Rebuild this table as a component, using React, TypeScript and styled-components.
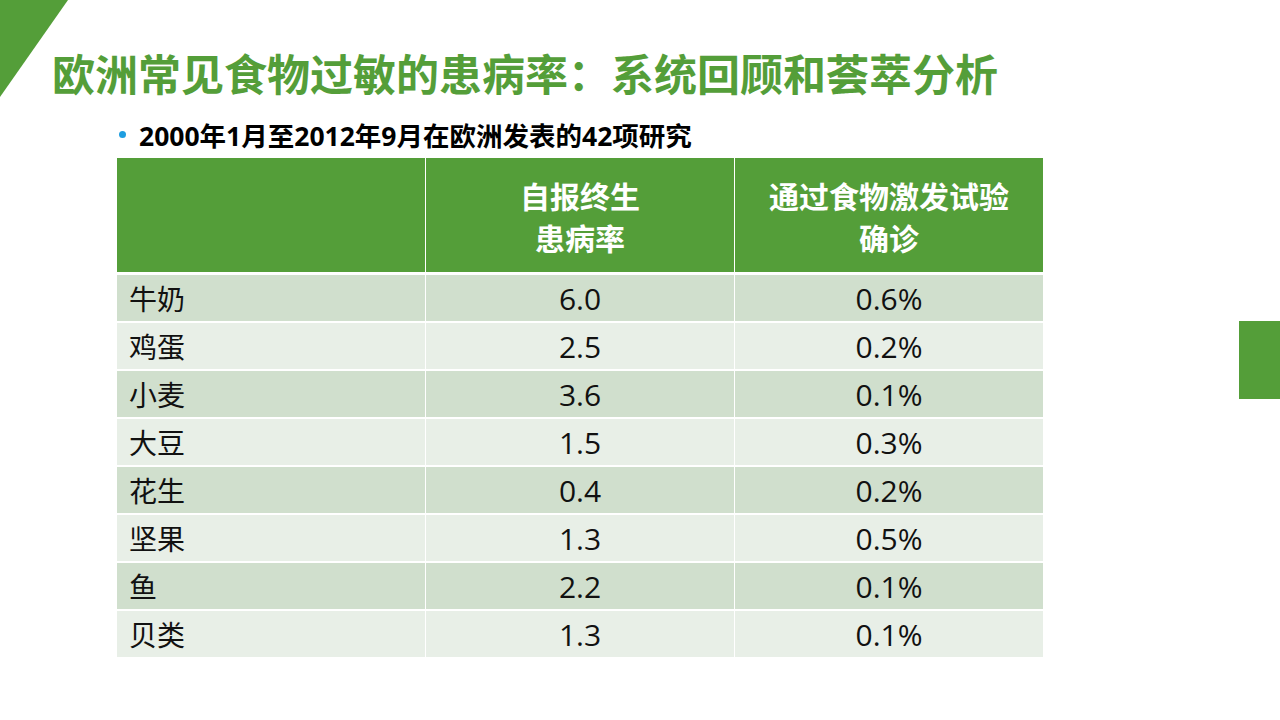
import React from "react";
import styled, { createGlobalStyle } from "styled-components";

interface FoodRow {
  name: string;
  selfReported: string;
  challenge: string;
}

const rows: FoodRow[] = [
  { name: "牛奶", selfReported: "6.0", challenge: "0.6%" },
  { name: "鸡蛋", selfReported: "2.5", challenge: "0.2%" },
  { name: "小麦", selfReported: "3.6", challenge: "0.1%" },
  { name: "大豆", selfReported: "1.5", challenge: "0.3%" },
  { name: "花生", selfReported: "0.4", challenge: "0.2%" },
  { name: "坚果", selfReported: "1.3", challenge: "0.5%" },
  { name: "鱼", selfReported: "2.2", challenge: "0.1%" },
  { name: "贝类", selfReported: "1.3", challenge: "0.1%" },
];

const GREEN = "#549e39";

const App: React.FC = () => {
  return (
    <>
      <GlobalStyle />
      <Slide>
        <Corner viewBox="0 0 68 97" width="68" height="97">
          <polygon points="0,0 68,0 0,97" fill={GREEN} />
        </Corner>
        <SideTab />
        <Title>欧洲常见食物过敏的患病率：系统回顾和荟萃分析</Title>
        <Bullet>
          <Dot />
          <span>2000年1月至2012年9月在欧洲发表的42项研究</span>
        </Bullet>
        <Table>
          <HeadRow>
            <HeadCell />
            <HeadCell>
              <HeadLine>自报终生</HeadLine>
              <HeadLine>患病率</HeadLine>
            </HeadCell>
            <HeadCell>
              <HeadLine>通过食物激发试验</HeadLine>
              <HeadLine>确诊</HeadLine>
            </HeadCell>
          </HeadRow>
          {rows.map((row, i) => (
            <BodyRow key={row.name} $shade={i % 2 === 0} $first={i === 0}>
              <NameCell>{row.name}</NameCell>
              <NumCell>{row.selfReported}</NumCell>
              <NumCell>{row.challenge}</NumCell>
            </BodyRow>
          ))}
        </Table>
      </Slide>
    </>
  );
};

export default App;

const GlobalStyle = createGlobalStyle`
  html, body {
    margin: 0;
    padding: 0;
    background: #ffffff;
  }
`;

const Slide = styled.div`
  position: relative;
  width: 1280px;
  height: 720px;
  overflow: hidden;
  background: #ffffff;
  font-family: "Noto Sans CJK SC", "Noto Sans", sans-serif;
`;

const Corner = styled.svg`
  position: absolute;
  left: 0;
  top: 0;
  display: block;
`;

const SideTab = styled.div`
  position: absolute;
  right: 0;
  top: 321px;
  width: 41px;
  height: 78px;
  background: ${GREEN};
`;

const Title = styled.h1`
  margin: 0;
  padding: 47px 0 0 52px;
  font-size: 43px;
  line-height: 50px;
  font-weight: 700;
  color: ${GREEN};
  white-space: nowrap;
`;

const Bullet = styled.div`
  display: flex;
  align-items: center;
  gap: 13px;
  margin-top: 20px;
  padding-left: 119px;
  height: 34px;
  font-family: "Open Sans", "Noto Sans CJK SC", sans-serif;
  font-size: 26.5px;
  font-weight: 700;
  color: #000000;
  white-space: nowrap;
`;

const Dot = styled.span`
  width: 7px;
  height: 7px;
  border-radius: 50%;
  background: #1f9ee0;
  flex-shrink: 0;
`;

const Table = styled.div`
  margin: 7px 0 0 117px;
  width: 926px;
`;

const HeadRow = styled.div`
  display: grid;
  grid-template-columns: 308px 309px 309px;
  height: 114px;
  background: ${GREEN};
`;

const HeadCell = styled.div`
  display: flex;
  flex-direction: column;
  align-items: center;
  justify-content: center;
  gap: 0;
  padding-top: 2px;
  color: #ffffff;
  font-weight: 700;
  & + & {
    border-left: 1px solid #ffffff;
  }
`;

const HeadLine = styled.span`
  display: block;
  font-size: 30px;
  line-height: 42px;
  white-space: nowrap;
`;

const BodyRow = styled.div<{ $shade: boolean; $first: boolean }>`
  display: grid;
  grid-template-columns: 308px 309px 309px;
  height: 46px;
  border-top: ${({ $first }) => ($first ? "3px" : "2px")} solid #ffffff;
  background: ${({ $shade }) => ($shade ? "#d0dfcd" : "#e8efe7")};
`;

const NameCell = styled.div`
  display: flex;
  align-items: center;
  padding-left: 12px;
  font-size: 28px;
  font-weight: 400;
  color: #111111;
`;

const NumCell = styled.div`
  display: flex;
  align-items: center;
  justify-content: center;
  border-left: 1px solid #ffffff;
  font-family: "Open Sans", sans-serif;
  font-size: 30px;
  color: #111111;
`;
